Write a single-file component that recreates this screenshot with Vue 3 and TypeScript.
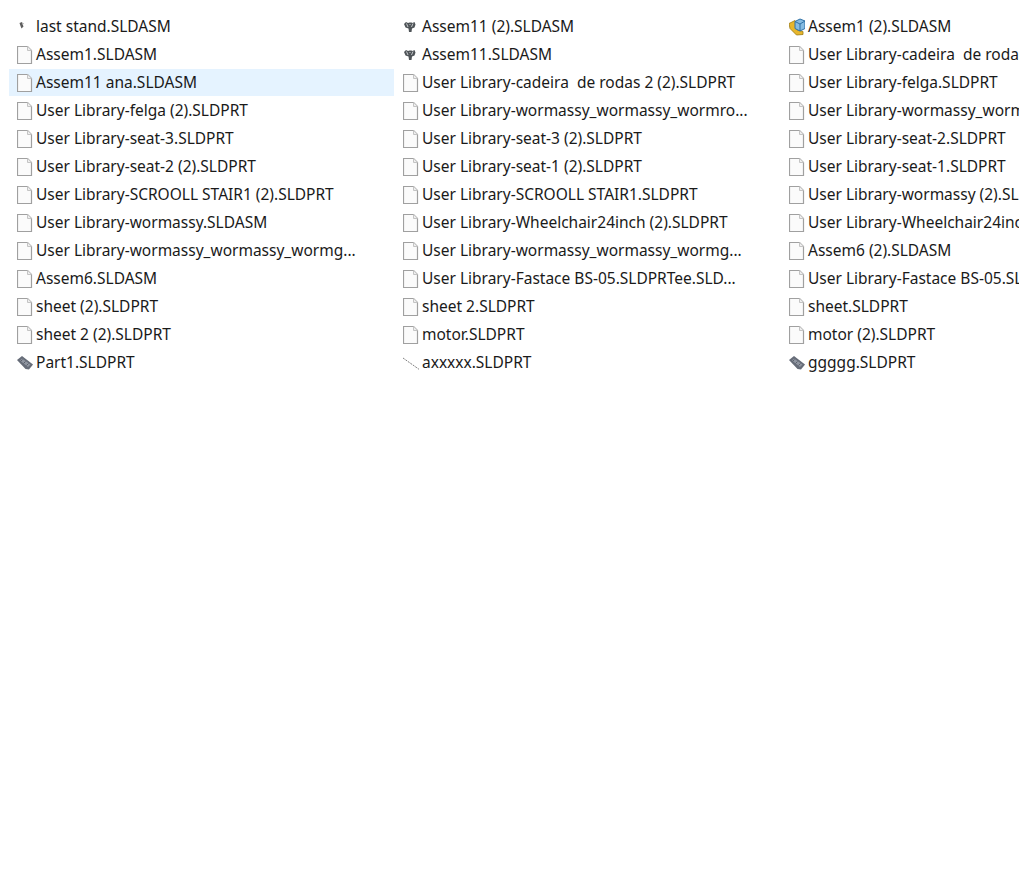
<script setup lang="ts">
type Kind = 'file' | 'tiny' | 'gear' | 'box' | 'plate' | 'line'
interface Item { name: string; kind: Kind; selected?: boolean }
const f = (name: string, kind: Kind = 'file', selected = false): Item => ({ name, kind, selected })
const items: Item[] = [
  f('last stand.SLDASM', 'tiny'), f('Assem11 (2).SLDASM', 'gear'), f('Assem1 (2).SLDASM', 'box'),
  f('Assem1.SLDASM'), f('Assem11.SLDASM', 'gear'), f('User Library-cadeira  de rodas 2.SLDPRT'),
  f('Assem11 ana.SLDASM', 'file', true), f('User Library-cadeira  de rodas 2 (2).SLDPRT'), f('User Library-felga.SLDPRT'),
  f('User Library-felga (2).SLDPRT'), f('User Library-wormassy_wormassy_wormro...'), f('User Library-wormassy_wormassy_wormro...'),
  f('User Library-seat-3.SLDPRT'), f('User Library-seat-3 (2).SLDPRT'), f('User Library-seat-2.SLDPRT'),
  f('User Library-seat-2 (2).SLDPRT'), f('User Library-seat-1 (2).SLDPRT'), f('User Library-seat-1.SLDPRT'),
  f('User Library-SCROOLL STAIR1 (2).SLDPRT'), f('User Library-SCROOLL STAIR1.SLDPRT'), f('User Library-wormassy (2).SLDASM'),
  f('User Library-wormassy.SLDASM'), f('User Library-Wheelchair24inch (2).SLDPRT'), f('User Library-Wheelchair24inch.SLDPRT'),
  f('User Library-wormassy_wormassy_wormg...'), f('User Library-wormassy_wormassy_wormg...'), f('Assem6 (2).SLDASM'),
  f('Assem6.SLDASM'), f('User Library-Fastace BS-05.SLDPRTee.SLD...'), f('User Library-Fastace BS-05.SLDPRT'),
  f('sheet (2).SLDPRT'), f('sheet 2.SLDPRT'), f('sheet.SLDPRT'),
  f('sheet 2 (2).SLDPRT'), f('motor.SLDPRT'), f('motor (2).SLDPRT'),
  f('Part1.SLDPRT', 'plate'), f('axxxxx.SLDPRT', 'line'), f('ggggg.SLDPRT', 'plate'),
]
</script>

<template>
  <div class="page">
    <div class="list">
      <div v-for="(it, i) in items" :key="i" class="row" :class="{ selected: it.selected }">
        <svg class="icon" width="16" height="18" viewBox="0 0 16 18">
          <template v-if="it.kind === 'file'">
            <path d="M.5 .5H10.500L14.500 4.500V17.500H.5Z" fill="#fbfbfb" stroke="#a0a0a0" stroke-width="1.200" />
            <path d="M10.500 .5V4.500H14.500" fill="#eeeeee" stroke="#c4c4c4" />
          </template>
          <template v-else-if="it.kind === 'tiny'">
            <path d="M2.500 5L5 4L5.500 6L6.500 8.500L4.500 10.500L3.500 8Z" fill="#5f5f5f" />
            <path d="M5 4.500L7 5.500L5.500 7Z" fill="#a8a8a8" />
          </template>
          <template v-else-if="it.kind === 'gear'">
            <path d="M1 6L3 4L5 5L6.500 4.500L8.500 4.500L9.500 5L11.500 4L12.500 6.500L11.500 9.500L9 10.500L8.500 14H6L5.500 10.500L2.500 9.500Z" fill="#4f5458" />
            <path d="M3.500 5.500L5 9M10 5.500L8.500 9M6.500 6.500H7.500" stroke="#c4c7ca" fill="none" />
          </template>
          <template v-else-if="it.kind === 'box'">
            <path d="M0 5.500L6 2.500L8 12L14 13.500V16.500L7.500 17L1 10.500Z" fill="#e7b62c" stroke="#9c7a10" stroke-width=".8" />
            <path d="M6 3.500L11 1L16 3V10.500L11 13L6 10.500Z" fill="#86bce2" stroke="#2f71a6" />
            <path d="M6 3.500L11 6L16 3M11 6V13" fill="none" stroke="#2f71a6" />
          </template>
          <template v-else-if="it.kind === 'plate'">
            <path d="M0 6L5 2L16 10.500L12 15.500L8.500 15Z" fill="#666c78" />
            <path d="M3 6.500L5 4.500L13.500 10.500L11 13Z" fill="#8f95a0" />
            <path d="M3.500 7.500L5.500 5.500M6.500 9.500L8.500 7.500M9.500 11.500L11.500 9.500" stroke="#5a606b" />
          </template>
          <template v-else>
            <path d="M0 4L17 16" stroke="#808080" stroke-dasharray="2 1" />
          </template>
        </svg>
        <span class="name">{{ it.name }}</span>
      </div>
    </div>
  </div>
</template>

<style>
html, body { background: #fff; margin: 0; overflow: hidden; }
</style>

<style scoped>
.page {
  width: 1019px;
  height: 894px;
  overflow: hidden;
  background: #fff;
  padding: 13px 0 0 9px;
  box-sizing: border-box;
}
.list {
  display: grid;
  grid-template-columns: repeat(3, 386px);
  grid-auto-rows: 28px;
  width: 1158px;
}
.row {
  display: flex;
  align-items: center;
  gap: 3px;
  padding-left: 8px;
  height: 27px;
  white-space: pre;
  margin-right: 1px;
}
.row.selected { background: #e5f3ff; }
.icon { flex: none; display: block; }
.name {
  font-family: "Noto Sans", sans-serif;
  font-size: 15.5px;
  color: #1a1a1a;
  line-height: 27px;
}
</style>
